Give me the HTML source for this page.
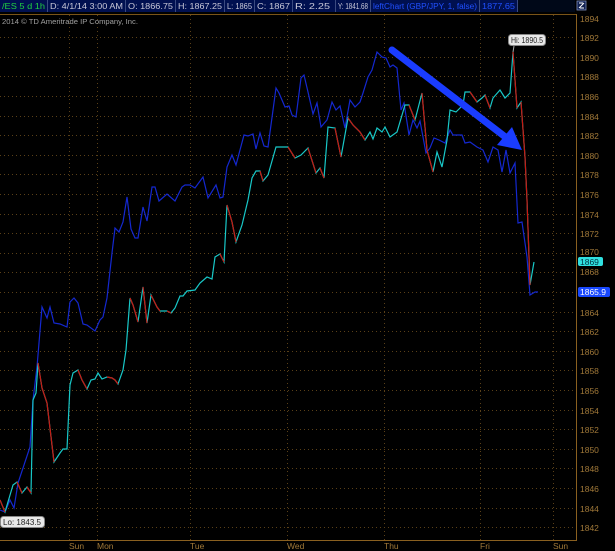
<!DOCTYPE html>
<html><head><meta charset="utf-8"><style>
html,body{margin:0;padding:0;background:#000;width:615px;height:551px;overflow:hidden}
svg{display:block}
text{font-family:"Liberation Sans",sans-serif}
</style></head><body>
<svg width="615" height="551" viewBox="0 0 615 551" xmlns="http://www.w3.org/2000/svg">
<rect width="615" height="551" fill="#000"/>
<!-- header -->
<rect x="0" y="0" width="517" height="12" fill="#001050"/>
<rect x="517" y="0" width="58" height="12" fill="#000818"/>
<g stroke="#3a4a80" stroke-width="1">
<line x1="47.5" y1="0" x2="47.5" y2="12"/><line x1="125.5" y1="0" x2="125.5" y2="12"/>
<line x1="175.5" y1="0" x2="175.5" y2="12"/><line x1="224.5" y1="0" x2="224.5" y2="12"/>
<line x1="254.5" y1="0" x2="254.5" y2="12"/><line x1="292.5" y1="0" x2="292.5" y2="12"/>
<line x1="335.5" y1="0" x2="335.5" y2="12"/><line x1="370.5" y1="0" x2="370.5" y2="12"/>
<line x1="479.5" y1="0" x2="479.5" y2="12"/><line x1="517.5" y1="0" x2="517.5" y2="12"/>
</g>
<g font-size="8" fill="#c8c8d8">
<text x="2" y="9" fill="#20d040" textLength="43" lengthAdjust="spacingAndGlyphs">/ES 5 d 1h</text>
<text x="50" y="9" textLength="73" lengthAdjust="spacingAndGlyphs">D: 4/1/14 3:00 AM</text>
<text x="128" y="9" textLength="45" lengthAdjust="spacingAndGlyphs">O: 1866.75</text>
<text x="178" y="9" textLength="44" lengthAdjust="spacingAndGlyphs">H: 1867.25</text>
<text x="227" y="9" textLength="25" lengthAdjust="spacingAndGlyphs">L: 1865</text>
<text x="257" y="9" textLength="33" lengthAdjust="spacingAndGlyphs">C: 1867</text>
<text x="295" y="9" textLength="35" lengthAdjust="spacingAndGlyphs">R: 2.25</text>
<text x="338" y="9" textLength="30" lengthAdjust="spacingAndGlyphs">Y: 1841.68</text>
<text x="373" y="9" fill="#2050ff" textLength="104" lengthAdjust="spacingAndGlyphs">leftChart (GBP/JPY, 1, false)</text>
<text x="482" y="9" fill="#2050ff" textLength="33" lengthAdjust="spacingAndGlyphs">1877.65</text>
</g>
<rect x="577" y="1" width="9" height="9" fill="#102050" stroke="#8090c0" stroke-width="0.8"/>
<path d="M579 8 L584 3 M579 3 h4 M580 8 h4" stroke="#fff" stroke-width="1" fill="none"/>
<!-- frame -->
<line x1="0" y1="14.5" x2="576" y2="14.5" stroke="#7a5418" stroke-width="1"/>
<line x1="576.5" y1="14" x2="576.5" y2="540" stroke="#8a6020" stroke-width="1"/>
<line x1="0" y1="540.5" x2="577" y2="540.5" stroke="#8a6020" stroke-width="1"/>
<!-- grid -->
<g stroke="#5a4018" stroke-width="1" stroke-dasharray="1,3">
<line x1="0" y1="37.5" x2="576" y2="37.5"/><line x1="0" y1="57.5" x2="576" y2="57.5"/>
<line x1="0" y1="76.5" x2="576" y2="76.5"/><line x1="0" y1="96.5" x2="576" y2="96.5"/>
<line x1="0" y1="116.5" x2="576" y2="116.5"/><line x1="0" y1="135.5" x2="576" y2="135.5"/>
<line x1="0" y1="155.5" x2="576" y2="155.5"/><line x1="0" y1="174.5" x2="576" y2="174.5"/>
<line x1="0" y1="194.5" x2="576" y2="194.5"/><line x1="0" y1="214.5" x2="576" y2="214.5"/>
<line x1="0" y1="233.5" x2="576" y2="233.5"/><line x1="0" y1="253.5" x2="576" y2="253.5"/>
<line x1="0" y1="272.5" x2="576" y2="272.5"/><line x1="0" y1="292.5" x2="576" y2="292.5"/>
<line x1="0" y1="312.5" x2="576" y2="312.5"/><line x1="0" y1="331.5" x2="576" y2="331.5"/>
<line x1="0" y1="351.5" x2="576" y2="351.5"/><line x1="0" y1="370.5" x2="576" y2="370.5"/>
<line x1="0" y1="390.5" x2="576" y2="390.5"/><line x1="0" y1="410.5" x2="576" y2="410.5"/>
<line x1="0" y1="429.5" x2="576" y2="429.5"/><line x1="0" y1="449.5" x2="576" y2="449.5"/>
<line x1="0" y1="468.5" x2="576" y2="468.5"/><line x1="0" y1="488.5" x2="576" y2="488.5"/>
<line x1="0" y1="508.5" x2="576" y2="508.5"/><line x1="0" y1="527.5" x2="576" y2="527.5"/>
<line x1="69.5" y1="15" x2="69.5" y2="540"/><line x1="97.5" y1="15" x2="97.5" y2="540"/>
<line x1="190.5" y1="15" x2="190.5" y2="540"/><line x1="287.5" y1="15" x2="287.5" y2="540"/>
<line x1="384.5" y1="15" x2="384.5" y2="540"/><line x1="480.5" y1="15" x2="480.5" y2="540"/>
<line x1="553.5" y1="15" x2="553.5" y2="540"/>
</g>
<text x="2" y="24" font-size="7.5" fill="#a0a0a0" textLength="136" lengthAdjust="spacingAndGlyphs">2014 © TD Ameritrade IP Company, Inc.</text>
<!-- y axis labels -->
<g font-size="8.5" fill="#a07838">
<text x="580" y="22">1894</text><text x="580" y="41">1892</text><text x="580" y="61">1890</text>
<text x="580" y="80">1888</text><text x="580" y="100">1886</text><text x="580" y="120">1884</text>
<text x="580" y="139">1882</text><text x="580" y="159">1880</text><text x="580" y="178">1878</text>
<text x="580" y="198">1876</text><text x="580" y="218">1874</text><text x="580" y="237">1872</text>
<text x="580" y="255">1870</text><text x="580" y="275">1868</text><text x="580" y="316">1864</text>
<text x="580" y="335">1862</text><text x="580" y="355">1860</text><text x="580" y="374">1858</text>
<text x="580" y="394">1856</text><text x="580" y="414">1854</text><text x="580" y="433">1852</text>
<text x="580" y="453">1850</text><text x="580" y="472">1848</text><text x="580" y="492">1846</text>
<text x="580" y="512">1844</text><text x="580" y="531">1842</text>
</g>
<g font-size="8.5" fill="#a07838">
<text x="69" y="549">Sun</text><text x="97" y="549">Mon</text><text x="190" y="549">Tue</text>
<text x="287" y="549">Wed</text><text x="384" y="549">Thu</text><text x="480" y="549">Fri</text>
<text x="553" y="549">Sun</text>
</g>
<rect x="578" y="257" width="25" height="9" rx="2" fill="#30e0e0"/>
<text x="580" y="265" font-size="8.5" fill="#003040">1869</text>
<rect x="578" y="287" width="32" height="10" rx="2" fill="#1848ff"/>
<text x="580" y="295" font-size="8.5" fill="#fff">1865.9</text>
<!-- blue line -->
<polyline fill="none" stroke="#1428d0" stroke-width="1.2" points="0,510 5,512 10,500 14,508 18,483 30,447 33,400 37,367 42,307 47,318 50,307 54,323 60,324 67,327 70,302 74,298 78,303 83,324 87,325 95,331 100,320 103,317 107,298 112,253 115,228 119,232 123,222 127,197 131,229 135,238 138,238 143,207 147,221 152,187 155,187 159,201 167,194 175,201 182,187 185,185 190,185 195,188 203,177 208,198 216,185 220,198 223,197 227,167 232,155 236,165 244,135 248,136 253,134 256,149 260,133 264,146 268,147 276,88 279,93 285,107 289,106 292,115 296,117 301,78 304,75 308,92 313,114 317,103 321,127 327,120 332,102 336,110 340,106 345,128 350,100 355,107 360,102 363,93 368,77 372,70 377,52 382,57 386,58 390,67 393,65 397,68 401,110 404,103 409,135 413,120 417,128 420,121 426,153 430,148 434,138 439,140 445,143 450,130 453,135 462,135 465,143 470,142 477,147 483,150 488,162 493,147 498,150 502,172 506,150 510,173 515,163 518,223 522,222 527,257 530,295 535,292 538,292"/>
<!-- price line -->
<g fill="none" stroke-width="1.2">
<polyline stroke="#18c8c8" points="0,500 5,512 13,485 17,482 22,493 27,487 31,493 33,400 36,393 38,363 42,388 47,403 54,462 60,453 63,449 67,449 70,385 73,373 78,370 82,380 87,389 91,380 95,379 98,373 102,379 107,377 112,378 115,380 118,384 123,370 126,350 130,298 133,305 138,322 143,287 147,323 151,295 157,307 160,311 167,311 171,313 175,308 180,296 183,296 187,291 195,290 200,283 207,277 212,279 215,257 220,254 224,262 227,205 232,222 236,242 242,225 248,200 252,178 256,171 260,171 263,181 268,175 276,147 288,147 295,158 301,155 308,148 316,173 320,168 324,178 328,127 335,128 341,157 348,118 353,125 360,132 365,140 370,132 373,139 377,128 382,132 385,127 390,137 397,132 405,105 409,105 415,120 422,93 427,150 433,172 437,152 442,167 447,140 450,110 456,112 463,105 465,92 470,92 477,102 482,98 485,95 490,108 493,98 500,90 505,98 510,93 513,52 517,108 521,102 525,157 527,200 530,285 534,262"/>
<g stroke="#c81810">
<polyline points="0,500 5,512"/><polyline points="17,482 22,493"/><polyline points="27,487 31,493"/>
<polyline points="38,363 42,388 47,403 54,462"/><polyline points="78,370 82,380 87,389"/>
<polyline points="107,377 112,378 115,380 118,384"/><polyline points="130,298 133,305 138,322"/>
<polyline points="143,287 147,323"/><polyline points="151,295 157,307 160,311"/><polyline points="167,311 171,313"/>
<polyline points="220,254 224,262"/><polyline points="227,205 232,222 236,242"/>
<polyline points="260,171 263,181"/>
<polyline points="288,147 295,158"/><polyline points="308,148 316,173"/><polyline points="320,168 324,178"/>
<polyline points="335,128 341,157"/><polyline points="348,118 353,125 360,132 365,140"/>
<polyline points="409,105 415,120"/><polyline points="422,93 427,150 433,172"/>
<polyline points="470,92 477,102"/><polyline points="485,95 490,108"/>
<polyline points="513,52 517,108"/><polyline points="521,102 525,157 527,200 530,285"/>
</g>
</g>
<!-- arrow -->
<line x1="392" y1="50" x2="508" y2="139" stroke="#1a3cff" stroke-width="7" stroke-linecap="round"/>
<polygon points="522,150 497,145 512,127" fill="#1a3cff"/>
<!-- labels -->
<rect x="508.5" y="34.5" width="37" height="11" rx="3" fill="#e8e8e8" stroke="#888"/>
<text x="511" y="43" font-size="8" fill="#222" textLength="32" lengthAdjust="spacingAndGlyphs">Hi: 1890.5</text>
<line x1="514" y1="46" x2="513" y2="52" stroke="#aaa"/>
<rect x="0.5" y="516.5" width="44" height="11" rx="3" fill="#e8e8e8" stroke="#888"/>
<text x="3" y="525" font-size="8" fill="#222" textLength="38" lengthAdjust="spacingAndGlyphs">Lo: 1843.5</text>
</svg>
</body></html>
